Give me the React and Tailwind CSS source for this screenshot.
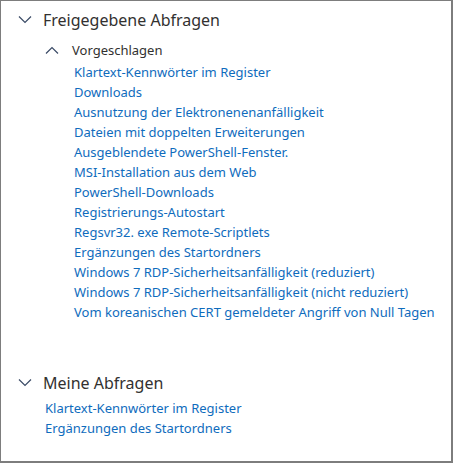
const SUGGESTED = [
  'Klartext-Kennwörter im Register',
  'Downloads',
  'Ausnutzung der Elektronenenanfälligkeit',
  'Dateien mit doppelten Erweiterungen',
  'Ausgeblendete PowerShell-Fenster.',
  'MSI-Installation aus dem Web',
  'PowerShell-Downloads',
  'Registrierungs-Autostart',
  'Regsvr32. exe Remote-Scriptlets',
  'Ergänzungen des Startordners',
  'Windows 7 RDP-Sicherheitsanfälligkeit (reduziert)',
  'Windows 7 RDP-Sicherheitsanfälligkeit (nicht reduziert)',
  'Vom koreanischen CERT gemeldeter Angriff von Null Tagen',
];

const MINE = ['Klartext-Kennwörter im Register', 'Ergänzungen des Startordners'];

function Chevron({ up = false, className = '' }) {
  return (
    <svg width="14" height="8" viewBox="0 0 14 8" className={className} fill="none">
      <path
        d={up ? 'M1 7.5 L7 1.5 L13 7.5' : 'M1 0.5 L7 6.5 L13 0.5'}
        stroke="#3a4a66"
        strokeWidth="1.2"
      />
    </svg>
  );
}

function LinkItem({ children }) {
  return (
    <a href="#" className="block h-5 leading-5 text-[13px] text-[#0f6cbd] whitespace-nowrap">
      {children}
    </a>
  );
}

export default function App() {
  return (
    <div className="w-[453px] h-[463px] bg-white border-l border-t border-r-2 border-b-2 border-[#7d7d7d] font-['Segoe_UI','Noto_Sans',sans-serif] text-[#323130]">
      {/* Shared queries */}
      <div className="flex items-center h-6 mt-[7px] pl-[17px]">
        <Chevron className="mr-[11px]" />
        <span className="text-[16px] leading-6">Freigegebene Abfragen</span>
      </div>

      <div className="flex items-center h-5 mt-[8px] pl-[44px]">
        <Chevron up className="mr-[13px]" />
        <span className="text-[13px] leading-5">Vorgeschlagen</span>
      </div>

      <div className="mt-[2px] pl-[73px]">
        {SUGGESTED.map(q => <LinkItem key={q}>{q}</LinkItem>)}
      </div>

      {/* My queries */}
      <div className="flex items-center h-6 mt-[49px] pl-[17px]">
        <Chevron className="mr-[11px]" />
        <span className="text-[16px] leading-6">Meine Abfragen</span>
      </div>

      <div className="mt-[3px] pl-[44px]">
        {MINE.map(q => <LinkItem key={q}>{q}</LinkItem>)}
      </div>
    </div>
  );
}
